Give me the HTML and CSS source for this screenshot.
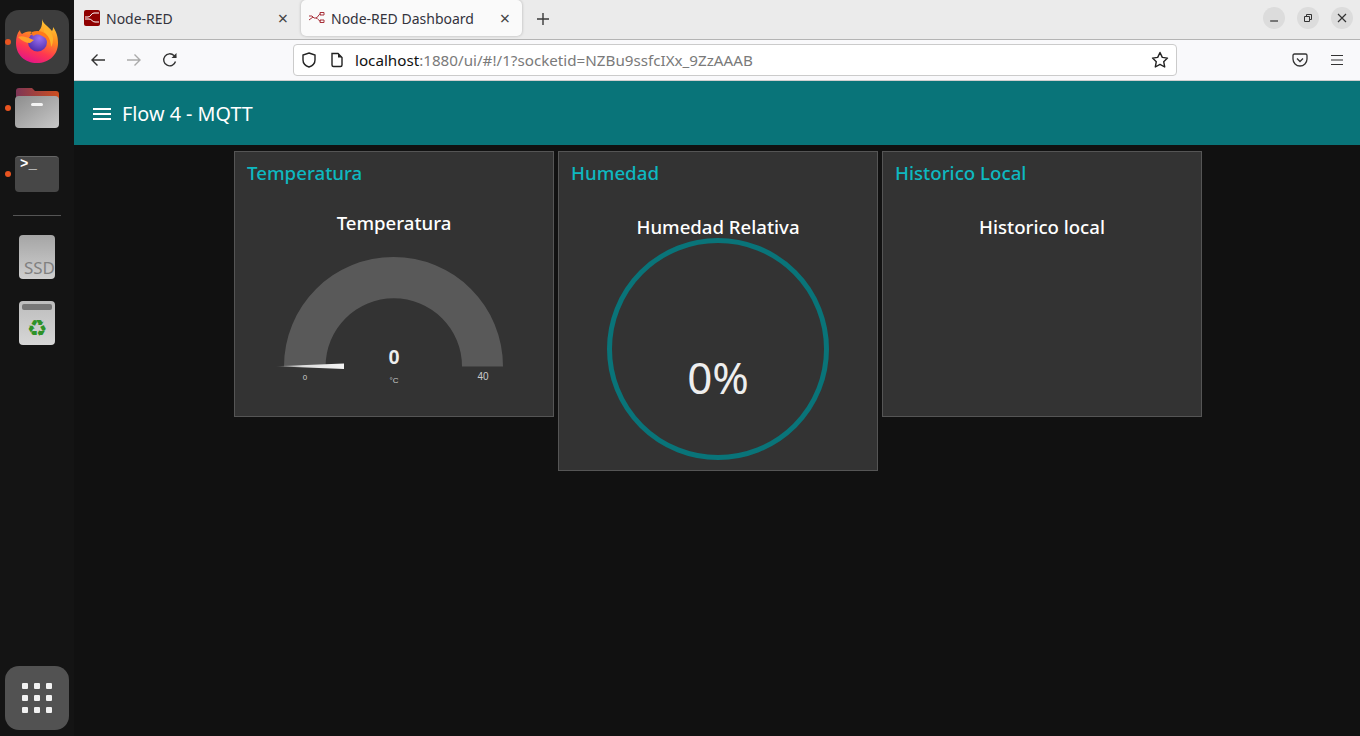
FILE: index.html
```html
<!DOCTYPE html>
<html lang="en">
    <head>
        <meta charset="UTF-8">
        <title>Node-RED Dashboard</title>
        <link rel="stylesheet" href="styles.css">
    </head>
    <body>
        <nav class="dock">
            <div class="dock-item active running">
                <svg width="48" height="48" viewBox="0 0 48 48">
                    <defs>
                        <linearGradient id="fox" x1="0.75" y1="0" x2="0.35" y2="1">
                            <stop offset="0" stop-color="#ffd53a"/>
                            <stop offset="0.4" stop-color="#ff8a1f"/>
                            <stop offset="0.72" stop-color="#ff3750"/>
                            <stop offset="1" stop-color="#e31587"/>
                        </linearGradient>
                        <radialGradient id="globe" cx="0.6" cy="0.3" r="0.75">
                            <stop offset="0" stop-color="#9a70f0"/>
                            <stop offset="1" stop-color="#4b2ba8"/>
                        </radialGradient>
                    </defs>
                    <path fill="url(#fox)" d="M29 1c1 5 6 7 10 12 1-1 1-3 1-4 4 5 5 11 5 16 0 12-9 20-21 20S3 37 3 25c0-5 1-10 4-13 0 2 1 3 2 4 3-2 6-3 10-2-1 1-2 2-2 2 2-1 4-1 7 0 2-4 6-6 5-15z"/>
                    <circle cx="24.5" cy="24" r="9.5" fill="url(#globe)"/>
                    <path fill="#ffa02a" d="M5 19c4-2 8 0 11 1 3 1 4 2 5 2l-4 3c-4 0-8-2-12-6z"/>
                    <path fill="#ff7a1a" d="M19 14c5-2 11-1 15 3 3 3 4 7 3 12-1-5-4-10-10-12-3-1-5 0-7 1-1-1-1-3-1-4z"/>
                    <path fill="#ffb32a" d="M30 5c4 4 9 8 10 15 0 3 0 6-2 9 0-7-3-12-7-15 0-3 0-6-1-9z"/>
                </svg>
            </div>
            <div class="dock-item running">
                <svg width="44" height="40" viewBox="0 0 44 40">
                    <defs>
                        <linearGradient id="folder-back" x1="0" y1="0" x2="1" y2="0">
                            <stop offset="0" stop-color="#7d3556"/>
                            <stop offset="1" stop-color="#cf4f1f"/>
                        </linearGradient>
                        <linearGradient id="folder-front" x1="0" y1="0" x2="1" y2="1">
                            <stop offset="0" stop-color="#8d8d8d"/>
                            <stop offset="1" stop-color="#c8c8c8"/>
                        </linearGradient>
                    </defs>
                    <path fill="url(#folder-back)" d="M1 12V3q0-3 3-3h13l3 3h21q3 0 3 3v10z"/>
                    <rect y="8" width="44" height="32" rx="4" fill="url(#folder-front)"/>
                    <rect x="16" y="15" width="12" height="3" rx="1.5" fill="#f4f4f4"/>
                </svg>
            </div>
            <div class="dock-item running">
                <div class="terminal-icon">
                    <span class="prompt">&gt;_</span>
                </div>
            </div>
            <div class="dock-sep"></div>
            <div class="dock-item">
                <div class="ssd-icon">SSD</div>
            </div>
            <div class="dock-item">
                <div class="trash-icon">
                    <div class="trash-lid"></div>
                    <span class="trash-mark">♻</span>
                </div>
            </div>
            <div class="app-grid">
                <span></span><span></span><span></span>
                <span></span><span></span><span></span>
                <span></span><span></span><span></span>
            </div>
        </nav>

        <div class="window">
            <div class="tabbar">
                <div class="tab">
                    <svg class="favicon" width="16" height="16" viewBox="0 0 16 16">
                        <rect width="16" height="16" rx="2" fill="#8f0000"/>
                        <path d="M1 7h3c3 0 3-4 6-4h5M5 9c3 0 3 3 6 3h4M1 9h4" fill="none" stroke="#fff" stroke-width="1"/>
                    </svg>
                    <span class="tab-title">Node-RED</span>
                    <span class="tab-close">×</span>
                </div>
                <div class="tab selected">
                    <svg class="favicon" width="16" height="16" viewBox="0 0 16 16">
                        <path d="M0 6h3l2 2h2c2 0 2-4 5-4M7 8c2 0 2 3 5 3M0 10l4-3M11 2.5h4V5h-4zM11 10h4v2.5h-4z" fill="none" stroke="#a8303a" stroke-width="1"/>
                    </svg>
                    <span class="tab-title">Node-RED Dashboard</span>
                    <span class="tab-close">×</span>
                </div>
                <svg class="new-tab" width="14" height="14" viewBox="0 0 14 14">
                    <path d="M7 1v12M1 7h12" stroke="#3a3a3a" stroke-width="1.4"/>
                </svg>
                <div class="win-controls">
                    <div class="win-btn">
                        <svg width="10" height="10" viewBox="0 0 10 10"><path d="M1 8h8" stroke="#333" stroke-width="1.2"/></svg>
                    </div>
                    <div class="win-btn">
                        <svg width="10" height="10" viewBox="0 0 10 10"><path d="M1.5 3.5h5v5h-5zM3.5 3V1.5h5v5H7" fill="none" stroke="#333"/></svg>
                    </div>
                    <div class="win-btn">
                        <svg width="10" height="10" viewBox="0 0 10 10"><path d="M1 1l8 8M9 1l-8 8" stroke="#333" stroke-width="1.2"/></svg>
                    </div>
                </div>
            </div>

            <div class="navbar">
                <svg class="nav-icon" width="16" height="16" viewBox="0 0 16 16">
                    <path d="M15 8H2M7.5 2.5L2 8l5.5 5.5" fill="none" stroke="#333" stroke-width="1.4"/>
                </svg>
                <svg class="nav-icon" width="16" height="16" viewBox="0 0 16 16">
                    <path d="M1 8h13M8.5 2.5L14 8l-5.5 5.5" fill="none" stroke="#aaa" stroke-width="1.4"/>
                </svg>
                <svg class="nav-icon" width="16" height="16" viewBox="0 0 16 16">
                    <path d="M13.5 9.5A6 6 0 1 1 12 3.6L14 5.5" fill="none" stroke="#333" stroke-width="1.4"/>
                    <path d="M14.5 1v5h-5z" fill="#333"/>
                </svg>
                <div class="urlbar">
                    <svg width="16" height="16" viewBox="0 0 16 16">
                        <path d="M8 1l6 2v5c0 3.5-3 6-6 7-3-1-6-3.5-6-7V3z" fill="none" stroke="#222" stroke-width="1.4"/>
                    </svg>
                    <svg class="page-icon" width="14" height="16" viewBox="0 0 14 16">
                        <path d="M2 1.5h6l4 4V13q0 1.5-1.5 1.5h-7Q2 14.5 2 13z" fill="none" stroke="#222" stroke-width="1.4"/>
                        <path d="M8 1.5v4h4" fill="#222"/>
                    </svg>
                    <span class="url"><span class="url-host">localhost</span>:1880/ui/#!/1?socketid=NZBu9ssfcIXx_9ZzAAAB</span>
                    <svg class="star" width="18" height="18" viewBox="0 0 18 18">
                        <path d="M9 1.5l2.3 4.9 5.2.7-3.800 3.600 1 5.300L9 13.400l-4.700 2.600 1-5.300-3.800-3.600 5.200-.7z" fill="none" stroke="#222" stroke-width="1.4" stroke-linejoin="round"/>
                    </svg>
                </div>
                <svg class="pocket" width="16" height="16" viewBox="0 0 16 16">
                    <path d="M2.5 2h11Q15 2 15 3.5V7a7 7 0 0 1-14 0V3.5Q1 2 2.5 2z" fill="none" stroke="#333" stroke-width="1.3"/>
                    <path d="M5 6.5l3 3 3-3" fill="none" stroke="#333" stroke-width="1.3"/>
                </svg>
                <svg class="menu" width="14" height="12" viewBox="0 0 14 12">
                    <path d="M1 1.5h12M1 6h12M1 10.5h12" stroke="#333" stroke-width="1.2"/>
                </svg>
            </div>

            <header class="dash-header">
                <div class="burger"><span></span><span></span><span></span></div>
                <h1>Flow 4 - MQTT</h1>
            </header>

            <main class="dash">
                <section class="card">
                    <h2>Temperatura</h2>
                    <p class="widget-title">Temperatura</p>
                    <svg class="gauge" width="318" height="150" viewBox="0 0 318 150">
                        <defs>
                            <linearGradient id="needle">
                                <stop offset="0" stop-color="#fff" stop-opacity="0"/>
                                <stop offset="0.4" stop-color="#ddd"/>
                                <stop offset="1" stop-color="#f4f4f4"/>
                            </linearGradient>
                        </defs>
                        <path d="M49 117.400a109.500 109.500 0 0 1 219 0h-41a68.200 68.200 0 0 0-136.400 0z" fill="#595959"/>
                        <path d="M40 117.300l69-2.800v5.600z" fill="url(#needle)"/>
                        <text class="gauge-value" x="159" y="115" text-anchor="middle">0</text>
                        <text class="gauge-unit" x="159" y="134" text-anchor="middle">°C</text>
                        <text class="gauge-min" x="70" y="131" text-anchor="middle">0</text>
                        <text class="gauge-max" x="248" y="131" text-anchor="middle">40</text>
                    </svg>
                </section>
                <section class="card tall">
                    <h2>Humedad</h2>
                    <p class="widget-title lower">Humedad Relativa</p>
                    <div class="ring"><span>0%</span></div>
                </section>
                <section class="card">
                    <h2>Historico Local</h2>
                    <p class="widget-title lower">Historico local</p>
                </section>
            </main>
        </div>
    </body>
</html>
```

FILE: styles.css
```css
* {
    box-sizing: border-box;
}
html, body {
    height: 100%;
}
body {
    margin: 0;
    display: flex;
    overflow: hidden;
    background: #111;
    font-family: "Noto Sans", "Open Sans", sans-serif;
}

/* dock */
.dock {
    width: 74px;
    flex: none;
    display: flex;
    flex-direction: column;
    align-items: center;
    padding: 9px 0 6px;
    background: #141414;
}
.dock-item {
    position: relative;
    width: 64px;
    height: 66px;
    flex: none;
    display: flex;
    align-items: center;
    justify-content: center;
}
.dock-item.active {
    background: #3d3d3d;
    border-radius: 14px;
    height: 64px;
    margin: 1px 0;
}
.dock-item.running::before {
    content: "";
    position: absolute;
    left: 0;
    top: 50%;
    width: 6px;
    height: 6px;
    margin-top: -3px;
    border-radius: 50%;
    background: #e95420;
}
.terminal-icon {
    width: 44px;
    height: 36px;
    border-radius: 4px;
    background: #474747;
    border-top: 1px solid #666;
    padding: 0 0 0 5px;
}
.prompt {
    display: block;
    color: #fff;
    font: 700 14px/15px "Liberation Mono", monospace;
}
.dock-sep {
    width: 48px;
    height: 1px;
    flex: none;
    margin: 8px 0 8px;
    background: #555;
}
.ssd-icon {
    width: 36px;
    height: 44px;
    border-radius: 4px;
    background: linear-gradient(#a5a5a5, #cfcfcf);
    color: #808080;
    font-size: 17px;
    line-height: 20px;
    text-align: right;
    padding: 23px 0 0;
    overflow: hidden;
}
.trash-icon {
    width: 36px;
    height: 44px;
    border-radius: 4px;
    background: linear-gradient(#bdbdbd, #d6d6d6);
    display: flex;
    flex-direction: column;
    align-items: center;
    padding-top: 3px;
}
.trash-lid {
    width: 30px;
    height: 6px;
    border-radius: 2px;
    background: #777;
}
.trash-mark {
    color: #2e9228;
    font: 23px/30px "DejaVu Sans", sans-serif;
    margin-top: 3px;
}
.app-grid {
    margin-top: auto;
    width: 64px;
    height: 64px;
    flex: none;
    border-radius: 14px;
    background: #525252;
    display: grid;
    grid-template-columns: repeat(3, 6px);
    grid-auto-rows: 6px;
    gap: 6px;
    justify-content: center;
    align-content: center;
}
.app-grid span {
    background: #f2f2f2;
    border-radius: 1px;
}

/* browser */
.window {
    flex: 1;
    min-width: 0;
    display: flex;
    flex-direction: column;
}
.tabbar {
    height: 40px;
    flex: none;
    display: flex;
    align-items: flex-start;
    background: #ebebeb;
    border-bottom: 1px solid #b4b4b4;
    color: #33333d;
    font-size: 14px;
}
.tab {
    width: 227px;
    height: 36px;
    display: flex;
    align-items: center;
    padding: 0 13px 0 10px;
}
.tab.selected {
    width: 221px;
    margin-right: 14px;
    background: #fafafa;
    border-radius: 5px;
    box-shadow: 0 0 3px rgba(0, 0, 0, 0.25);
    padding: 0 12px 0 8px;
}
.favicon {
    margin-right: 6px;
    flex: none;
}
.tab-title {
    flex: 1;
    white-space: nowrap;
}
.tab-close {
    color: #444;
    font-size: 18px;
    line-height: 18px;
}
.new-tab {
    margin-top: 12px;
}
.win-controls {
    margin-left: auto;
    display: flex;
    gap: 12px;
    padding: 7px 7px 0 0;
}
.win-btn {
    width: 22px;
    height: 22px;
    border-radius: 50%;
    background: #dcdcdc;
    display: flex;
    align-items: center;
    justify-content: center;
}
.navbar {
    height: 41px;
    flex: none;
    display: flex;
    align-items: center;
    padding: 0 16px;
    background: #f9f9fb;
    border-bottom: 1px solid #cfcfcf;
}
.nav-icon {
    margin-right: 20px;
    flex: none;
}
.urlbar {
    width: 884px;
    height: 32px;
    margin: 0 0 0 95px;
    flex: none;
    display: flex;
    align-items: center;
    padding: 0 7px;
    background: #fff;
    border: 1px solid #cbcbcb;
    border-radius: 4px;
    font-size: 15.2px;
    color: #7a7a7a;
}
.page-icon {
    margin-left: 13px;
}
.url {
    margin-left: 11px;
    flex: 1;
    white-space: nowrap;
}
.url-host {
    color: #111;
}
.pocket {
    margin-left: 115px;
}
.menu {
    margin-left: 22px;
}

/* dashboard */
.dash-header {
    height: 64px;
    flex: none;
    display: flex;
    align-items: center;
    padding: 2px 19px 0;
    background: #097479;
    color: #fff;
}
.burger {
    width: 18px;
    display: flex;
    flex-direction: column;
    gap: 3px;
    margin-right: 11px;
}
.burger span {
    height: 2px;
    background: #fff;
}
h1 {
    margin: 0 0 2px;
    font-size: 19.8px;
    font-weight: 400;
}
.dash {
    flex: 1;
    display: flex;
    align-items: flex-start;
    justify-content: center;
    gap: 4px;
    padding: 6px 0 0 2px;
    background: #111;
}
.card {
    width: 320px;
    height: 266px;
    flex: none;
    background: #333;
    border: 1px solid #555;
}
.card.tall {
    height: 320px;
}
h2 {
    margin: 0;
    padding: 9px 12px 0;
    font-size: 18.7px;
    line-height: 24px;
    font-weight: 500;
    color: #0eb8c0;
}
.widget-title {
    margin: 26px 0 0;
    text-align: center;
    color: #fff;
    font-size: 18.6px;
    line-height: 24px;
    font-weight: 500;
}
.widget-title.lower {
    margin-top: 30px;
}
.gauge {
    display: block;
    margin-top: 14px;
}
.gauge-value {
    fill: #eee;
    font: 700 20px "Liberation Sans", sans-serif;
}
.gauge-unit {
    fill: #ccc;
    font: 8px "Liberation Sans", sans-serif;
}
.gauge-min {
    fill: #ccc;
    font: 8px "Liberation Sans", sans-serif;
}
.gauge-max {
    fill: #ccc;
    font: 10px "Liberation Sans", sans-serif;
}
.ring {
    width: 222px;
    height: 222px;
    margin: -1px auto 0;
    border: 5px solid #097479;
    border-radius: 50%;
    display: flex;
    justify-content: center;
    padding-top: 104px;
    color: #eee;
    font-size: 44px;
    line-height: 60px;
    font-weight: 400;
}
```
